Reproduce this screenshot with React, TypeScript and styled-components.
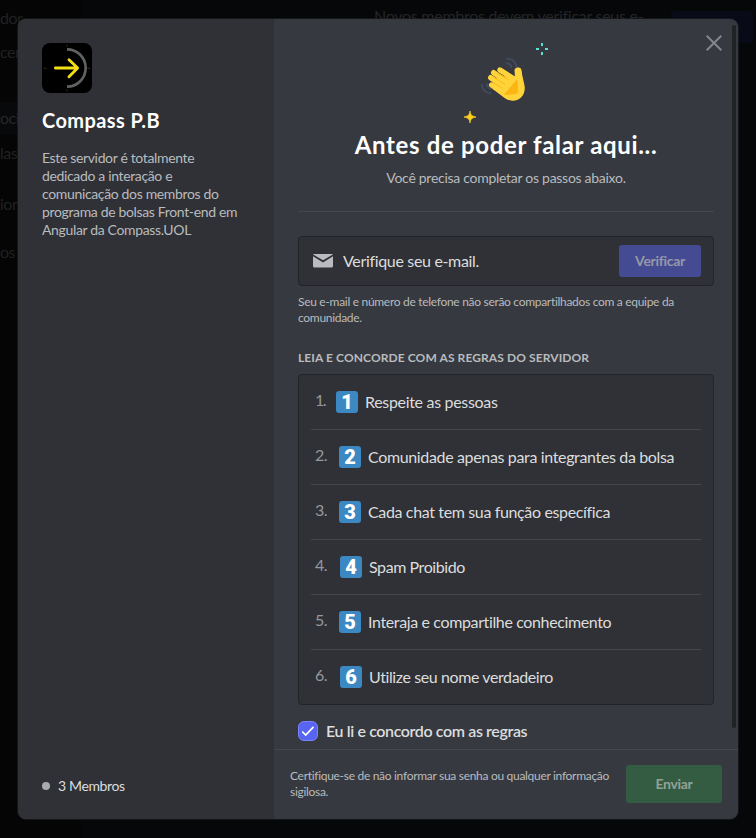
import React from 'react';
import styled, { createGlobalStyle } from 'styled-components';

const GlobalStyle = createGlobalStyle`
  *, *::before, *::after { box-sizing: border-box; }
  html, body { margin: 0; padding: 0; background: #060709; overflow: hidden; }
  body { font-family: Lato, "Open Sans", sans-serif; color: #dcddde; }
  h1, h2, h3, p, ol { margin: 0; padding: 0; }
`;

const Screen = styled.div`
  position: relative;
  width: 756px;
  height: 838px;
  overflow: hidden;
`;

/* Dimmed settings page behind the dialog */
const Backdrop = styled.div`
  display: grid;
  grid-template-columns: 81px 1fr;
  height: 100%;
`;

const SettingsNav = styled.nav`
  display: flex;
  flex-direction: column;
  align-items: stretch;
  padding-top: 2px;
  background: #050505;
`;

const SettingsItem = styled.div<{ $gap?: number; $active?: boolean }>`
  height: 32px;
  margin-top: ${(p) => p.$gap ?? 2}px;
  width: 81px;
  font-size: 16px;
  line-height: 32px;
  letter-spacing: -0.5px;
  color: ${(p) => (p.$active ? '#26282a' : '#202122')};
  background: ${(p) => (p.$active ? '#08090b' : 'transparent')};
`;

const SettingsPane = styled.div`
  display: flex;
  justify-content: space-between;
  align-items: flex-start;
  padding: 0 3px 0 293px;
  background: #060709;
`;

const SettingsNotice = styled.p`
  padding-top: 6px;
  font-size: 16px;
  line-height: 20px;
  letter-spacing: -0.27px;
  white-space: nowrap;
  color: #242526;
`;

const SettingsAction = styled.div`
  width: 82px;
  height: 32px;
  margin-top: 11px;
  border-radius: 3px;
  background: #090a18;
`;

const Overlay = styled.div`
  position: absolute;
  inset: 0;
  padding: 19px 18px;
`;

const Dialog = styled.section`
  position: relative;
  display: grid;
  grid-template-columns: 256px 1fr;
  height: 800px;
  overflow: hidden;
  border-radius: 8px;
  background: #36393f;
  box-shadow: 0 0 0 1px rgba(32, 34, 37, 0.6);
`;

const GuildPanel = styled.aside`
  display: flex;
  flex-direction: column;
  padding: 24px;
  background: #2f3136;
`;

const GuildIcon = styled.svg`
  display: block;
  width: 50px;
  height: 50px;
  border-radius: 8px;
`;

const GuildName = styled.h2`
  margin-top: 15px;
  font-size: 20px;
  line-height: 24px;
  font-weight: 700;
  letter-spacing: 0.4px;
  color: #fff;
`;

const GuildAbout = styled.p`
  margin-top: 17px;
  font-size: 14px;
  line-height: 18px;
  letter-spacing: -0.35px;
  white-space: nowrap;
  color: #b9bbbe;
`;

const MemberCount = styled.div`
  display: flex;
  align-items: center;
  gap: 8px;
  margin-top: auto;
  height: 18px;
  font-size: 14px;
  line-height: 16px;
  padding-bottom: 1px;
  letter-spacing: -0.36px;
  color: #dcddde;

  &::before {
    content: '';
    width: 8px;
    height: 8px;
    border-radius: 50%;
    background: #a9abaf;
  }
`;

const FormPanel = styled.div`
  display: grid;
  grid-template-rows: 730px 70px;
  min-width: 0;
`;

const Scroller = styled.div`
  display: flex;
  min-height: 0;
  overflow: hidden;
`;

const ScrollThumb = styled.div`
  width: 4px;
  height: 703px;
  margin: 6px 0 0 18px;
  border-radius: 2px;
  background: #202225;
`;

const FormBody = styled.div`
  display: flex;
  flex-direction: column;
  width: 416px;
  margin-left: 24px;
`;

const Header = styled.header`
  display: flex;
  flex-direction: column;
  align-items: center;
  height: 193px;
  padding-top: 16px;
  border-bottom: 1px solid #44474d;
`;

const WaveArt = styled.svg`
  width: 92px;
  height: 95px;
`;

const Title = styled.h1`
  margin-top: 0;
  font-size: 24px;
  line-height: 30px;
  font-weight: 700;
  letter-spacing: 0.66px;
  color: #fff;
`;

const Subtitle = styled.p`
  margin-top: 9px;
  font-size: 14px;
  line-height: 18px;
  letter-spacing: -0.28px;
  color: #b9bbbe;
`;

const Card = styled.div`
  border: 1px solid #222427;
  border-radius: 4px;
  background: #2f3136;
`;

const EmailCard = styled(Card)`
  display: flex;
  align-items: center;
  height: 50px;
  margin-top: 24px;
  padding: 0 12px 0 14px;
`;

const EmailLabel = styled.span`
  flex: 1;
  margin-left: 10px;
  padding-bottom: 2px;
  font-size: 16px;
  letter-spacing: -0.33px;
  color: #dcddde;
`;

const Button = styled.button<{ $tone: 'brand' | 'positive' }>`
  flex: none;
  width: ${(p) => (p.$tone === 'brand' ? 82 : 96)}px;
  height: ${(p) => (p.$tone === 'brand' ? 32 : 38)}px;
  padding: 0 0 1px;
  border: 0;
  border-radius: 3px;
  background: ${(p) => (p.$tone === 'brand' ? '#454b93' : '#335c42')};
  color: ${(p) => (p.$tone === 'brand' ? '#9698a9' : '#93a297')};
  font-family: inherit;
  font-size: 14px;
  font-weight: 700;
  letter-spacing: -0.3px;
`;

const FinePrint = styled.p`
  font-size: 12px;
  line-height: 16px;
  letter-spacing: -0.3px;
  white-space: nowrap;
  color: #b9bbbe;
`;

const EmailNote = styled(FinePrint)`
  margin-top: 8px;
`;

const SectionTitle = styled.h3`
  margin-top: 24px;
  margin-bottom: 8px;
  font-size: 12px;
  line-height: 16px;
  font-weight: 700;
  letter-spacing: 0.1px;
  text-transform: uppercase;
  white-space: nowrap;
  color: #b9bbbe;
`;

const RuleCard = styled(Card)`
  padding: 0 12px;
`;

const Rules = styled.ol`
  list-style: none;
`;

const Rule = styled.li`
  display: flex;
  align-items: center;
  height: 54px;
  padding-left: 4px;

  & + & {
    height: 55px;
    border-top: 1px solid #42454a;
  }
`;

const RuleNumber = styled.span<{ $width: number }>`
  width: ${(p) => p.$width}px;
  padding-bottom: 5px;
  font-size: 16px;
  letter-spacing: ${(p) => (p.$width < 24 ? -1.6 : -0.5)}px;
  color: #96989d;
`;

const Keycap = styled.span`
  display: flex;
  align-items: center;
  justify-content: center;
  width: 22px;
  height: 22px;
  border-radius: 3px;
  background: #3b88c3;
  color: #fff;
  font-family: Roboto, sans-serif;
  font-size: 20px;
  line-height: 22px;
  font-weight: 900;
`;

const RuleText = styled.span<{ $tracking: number }>`
  margin-left: 7px;
  padding-bottom: 1px;
  font-size: 16px;
  letter-spacing: ${(p) => p.$tracking}px;
  white-space: nowrap;
  color: #dcddde;
`;

const Agreement = styled.label`
  display: flex;
  align-items: center;
  gap: 8px;
  height: 20px;
  margin-top: 16px;
  font-size: 16px;
  font-weight: 600;
  letter-spacing: -0.38px;
  color: #dcddde;
`;

const AgreementText = styled.span`
  padding-bottom: 2px;
`;

const CheckBox = styled.span`
  display: grid;
  place-items: center;
  width: 20px;
  height: 20px;
  border: 1px solid #7983f5;
  border-radius: 6px;
  background: #5865f2;
`;

const Footer = styled.footer`
  display: flex;
  align-items: center;
  justify-content: space-between;
  padding: 0 16px 2px;
  border-top: 1px solid #44474d;
`;

const CloseButton = styled.button`
  position: absolute;
  top: 12px;
  right: 12px;
  display: grid;
  place-items: center;
  width: 24px;
  height: 24px;
  padding: 0;
  border: 0;
  background: none;
  color: #84868b;
`;

const rules = [
  { text: 'Respeite as pessoas', number: 21, tracking: -0.32 },
  { text: 'Comunidade apenas para integrantes da bolsa', number: 24, tracking: -0.35 },
  { text: 'Cada chat tem sua função específica', number: 24, tracking: -0.36 },
  { text: 'Spam Proibido', number: 25, tracking: -0.42 },
  { text: 'Interaja e compartilhe conhecimento', number: 24, tracking: -0.37 },
  { text: 'Utilize seu nome verdadeiro', number: 25, tracking: -0.4 },
];

function GuildLogo() {
  return (
    <GuildIcon viewBox="0 0 150 150" fill="none">
      <rect width="150" height="150" fill="#000" />
      <circle cx="75" cy="75" r="67" stroke="#1b1c16" strokeWidth="2" strokeDasharray="2 7" />
      <path d="M75 19a56 56 0 0 1 0 112" stroke="#606163" strokeWidth="8" />
      <path d="M75 5v6M75 139v6M5 76h9M136 76h9" stroke="#4c480f" strokeWidth="2" />
      <path d="M40 75h66M81 50l26 25-26 26" stroke="#f2de17" strokeWidth="8.5" strokeLinecap="round" strokeLinejoin="round" />
    </GuildIcon>
  );
}

function WavingHand() {
  return (
    <WaveArt viewBox="0 0 276 285" fill="none">
      <path d="M142 71c14-1 25 9 28 25M140 85c8 0 13 5 14 12M66 149c0 14 11 25 26 26M81 148c1 8 5 12 12 13" stroke="#424a62" strokeWidth="6" strokeLinecap="round" />
      <g stroke="#ffd43b" strokeWidth="16" strokeLinecap="round">
        <path d="M120 105l42 27M101 113l46 31M92 128l48 32M95 150l42 26" />
        <path d="M174 108l4 35" strokeWidth="21" />
      </g>
      <path d="M117 119l46 13 4-30c7-7 17-3 17 7l9 40c6 26-10 49-36 48-14 0-21-7-31-14l-28-21-2-12Z" fill="#ffd43b" />
      <path d="M113 115l32 19M102 127l32 21M99 142l27 17" stroke="#fcb51a" strokeWidth="3" strokeLinecap="round" />
      <path d="M169 135q4-2 4 4l1 29q0 10-10 10l-27 2q-6 0-2-5Z" fill="#fdb515" />
      <path d="M246 24v9M246 51v9M228 42h9M255 42h9" stroke="#58e0d5" strokeWidth="6" />
      <path d="M30 228c2 12 5 15 18 18-13 3-16 6-18 18-2-12-5-15-18-18 13-3 16-6 18-18Z" fill="#fdd01e" stroke="#fdd01e" strokeWidth="2" />
    </WaveArt>
  );
}

export default function App() {
  return (
    <>
      <GlobalStyle />
      <Screen>
        <Backdrop aria-hidden>
          <SettingsNav>
            <SettingsItem $gap={0}>dor</SettingsItem>
            <SettingsItem>ceri</SettingsItem>
            <SettingsItem $gap={34} $active>oci</SettingsItem>
            <SettingsItem $gap={3}>las</SettingsItem>
            <SettingsItem $gap={19}>ion</SettingsItem>
            <SettingsItem $gap={16}>os</SettingsItem>
          </SettingsNav>
          <SettingsPane>
            <SettingsNotice>Novos membros devem verificar seus e-</SettingsNotice>
            <SettingsAction />
          </SettingsPane>
        </Backdrop>
        <Overlay>
          <Dialog role="dialog">
            <GuildPanel>
              <GuildLogo />
              <GuildName>Compass P.B</GuildName>
              <GuildAbout>
                Este servidor é totalmente<br />
                dedicado a interação e<br />
                comunicação dos membros do<br />
                programa de bolsas Front-end em<br />
                Angular da Compass.UOL
              </GuildAbout>
              <MemberCount>3 Membros</MemberCount>
            </GuildPanel>
            <FormPanel>
              <Scroller>
                <FormBody>
                  <Header>
                    <WavingHand />
                    <Title>Antes de poder falar aqui...</Title>
                    <Subtitle>Você precisa completar os passos abaixo.</Subtitle>
                  </Header>
                  <EmailCard>
                    <svg width="20" height="14" viewBox="0 0 20 14" fill="#b9bbbe">
                      <path d="M1 0h18a1 1 0 0 1 .9.6L10 6.3.1.6A1 1 0 0 1 1 0Z" />
                      <path d="M0 2.3 10 8.4l10-6.1V12a1.5 1.5 0 0 1-1.500 1.500h-17A1.500 1.500 0 0 1 0 12Z" />
                    </svg>
                    <EmailLabel>Verifique seu e-mail.</EmailLabel>
                    <Button $tone="brand">Verificar</Button>
                  </EmailCard>
                  <EmailNote>
                    Seu e-mail e número de telefone não serão compartilhados com a equipe da<br />
                    comunidade.
                  </EmailNote>
                  <SectionTitle>Leia e concorde com as regras do servidor</SectionTitle>
                  <RuleCard>
                    <Rules>
                      {rules.map((rule, i) => (
                        <Rule key={rule.text}>
                          <RuleNumber $width={rule.number}>{i + 1}.</RuleNumber>
                          <Keycap>{i + 1}</Keycap>
                          <RuleText $tracking={rule.tracking}>{rule.text}</RuleText>
                        </Rule>
                      ))}
                    </Rules>
                  </RuleCard>
                  <Agreement>
                    <CheckBox>
                      <svg width="14" height="12" viewBox="0 0 14 12" fill="none">
                        <path d="M1.200 6.500 4.700 10 12.500 1.800" stroke="#fff" strokeWidth="1.700" />
                      </svg>
                    </CheckBox>
                    <AgreementText>Eu li e concordo com as regras</AgreementText>
                  </Agreement>
                </FormBody>
                <ScrollThumb />
              </Scroller>
              <Footer>
                <FinePrint>
                  Certifique-se de não informar sua senha ou qualquer informação<br />
                  sigilosa.
                </FinePrint>
                <Button $tone="positive">Enviar</Button>
              </Footer>
            </FormPanel>
            <CloseButton aria-label="Fechar">
              <svg width="16" height="16" viewBox="0 0 16 16" fill="none" stroke="currentColor" strokeWidth="2">
                <path d="M.7.7l14.600 14.600M15.300.7.7 15.300" />
              </svg>
            </CloseButton>
          </Dialog>
        </Overlay>
      </Screen>
    </>
  );
}
